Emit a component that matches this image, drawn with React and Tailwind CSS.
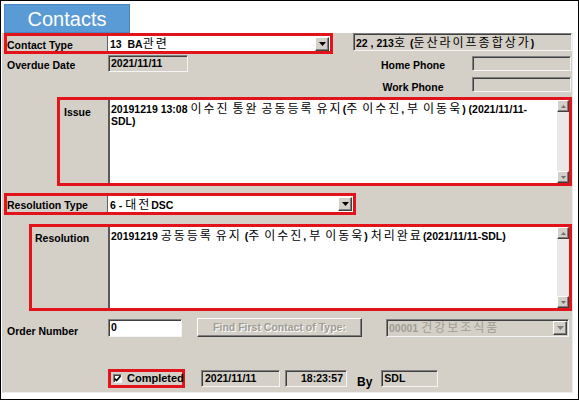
import React from "react";

const LAT = "font-['Liberation_Sans',Arial,'Noto_Sans_CJK_KR',sans-serif]";
const SUNKEN =
  "border border-t-[#808080] border-l-[#808080] border-b-[#f4f4f4] border-r-[#f4f4f4] shadow-[inset_1px_1px_0_#404040]";
const RAISED =
  "border border-t-white border-l-white border-b-[#404040] border-r-[#404040] shadow-[inset_-1px_-1px_0_#808080]";

function Txt({ s, kClass = "" }) {
  const parts = s.split(/([\uAC00-\uD7A3]+)/);
  return (
    <>
      {parts.map((p, i) =>
        /[\uAC00-\uD7A3]/.test(p) ? (
          <span
            key={i}
            className={
              "font-['Noto_Sans_CJK_KR',sans-serif] font-normal text-[12px] tracking-[2px] " + kClass
            }
          >
            {p}
          </span>
        ) : (
          <span key={i}>{p}</span>
        )
      )}
    </>
  );
}

function Arrow({ color = "#000" }) {
  return (
    <svg width="7" height="4" viewBox="0 0 7 4">
      <polygon points="0,0 7,0 3.5,4" fill={color} />
    </svg>
  );
}

function DropBtn({ color }) {
  return (
    <div className={"w-[14px] h-[14px] bg-[#d4d0c8] flex items-center justify-center shrink-0 " + RAISED}>
      <Arrow color={color} />
    </div>
  );
}

function Scrollbar() {
  return (
    <div className="w-[12px] h-full flex flex-col shrink-0">
      <div className={"h-[12px] bg-[#d4d0c8] flex items-center justify-center " + RAISED}>
        <svg width="5" height="3" viewBox="0 0 5 3">
          <polygon points="0,3 5,3 2.5,0" fill="#707070" />
        </svg>
      </div>
      <div className="flex-1 bg-[#ebe9e5]" />
      <div className={"h-[12px] bg-[#d4d0c8] flex items-center justify-center " + RAISED}>
        <svg width="5" height="3" viewBox="0 0 5 3">
          <polygon points="0,0 5,0 2.5,3" fill="#707070" />
        </svg>
      </div>
    </div>
  );
}

function Label({ children, className = "" }) {
  return (
    <span className={"text-[10.5px] font-bold text-black whitespace-nowrap leading-none " + className}>
      {children}
    </span>
  );
}

export default function App() {
  return (
    <div className={"w-[579px] h-[400px] bg-white border border-black flex flex-col overflow-hidden " + LAT}>
      <div className="mt-[3px] ml-[3px] w-[126px] h-[29px] bg-[#5b9bd5] border border-[#4a86c0] flex items-center justify-center">
        <span className="text-white text-[20px] leading-none">Contacts</span>
      </div>

      <div className="ml-[1px] w-[571px] h-[360px] bg-[#d4d0c8] border-r border-b border-[#ececec] flex flex-col">
        {/* Row 1 */}
        <div className="flex h-[21px]">
          <div className="ml-[2px] w-[329px] h-[21px] border-[3px] border-[#e3131b] flex items-center bg-[#d4d0c8]">
            <div className="w-[100px] leading-none">
              <Label>Contact Type</Label>
            </div>
            <div className="flex-1 h-full bg-white flex items-center pl-[2px] pr-[1px] border-l border-l-[#606060]">
              <span className="flex-1 text-[10.5px] font-bold whitespace-pre leading-none">
                <Txt s="13  BA관련" />
              </span>
              <DropBtn />
            </div>
          </div>
          <div className={"ml-[20px] w-[219px] h-[18px] bg-[#d4d0c8] flex items-center pl-[2px] " + SUNKEN}>
            <span className="text-[10.5px] font-bold whitespace-nowrap leading-none">
              <Txt s="22 , 213호 (둔산라이프종합상가)" />
            </span>
          </div>
        </div>

        {/* Row 2/3 */}
        <div className="flex mt-[1px]">
          <div className="flex items-center h-[17px]">
            <div className="w-[106px] pl-[5px] leading-none">
              <Label>Overdue Date</Label>
            </div>
            <div className={"w-[80px] h-[17px] bg-[#d4d0c8] flex items-center pl-[2px] " + SUNKEN}>
              <span className="text-[10.5px] font-bold leading-none">2021/11/11</span>
            </div>
          </div>
          <div className="ml-auto mr-[1px] flex flex-col gap-[6px] pt-[1px]">
            <div className="flex items-center h-[15px]">
              <div className="w-[90px] text-center pt-[1px] leading-none">
                <Label>Home Phone</Label>
              </div>
              <div className={"ml-[14px] w-[99px] h-[15px] bg-[#d4d0c8] " + SUNKEN} />
            </div>
            <div className="flex items-center h-[15px]">
              <div className="w-[90px] text-center pt-[2px] leading-none">
                <Label>Work Phone</Label>
              </div>
              <div className={"ml-[14px] w-[99px] h-[15px] bg-[#d4d0c8] " + SUNKEN} />
            </div>
          </div>
        </div>

        {/* Issue */}
        <div className="mt-[5px] ml-[55px] w-[515px] h-[89px] border-[3px] border-[#e3131b] flex">
          <div className="w-[48px] pl-[4px] pt-[3px] leading-none">
            <Label>Issue</Label>
          </div>
          <div className="flex-1 flex bg-white border-l-2 border-l-[#5a5a5a]">
            <div className="flex-1 pl-[1px] pt-[2px] text-[10.5px] font-bold leading-[12px] whitespace-nowrap overflow-hidden">
              <div>
                <Txt s="20191219 13:08 이수진 통완 공동등록 유지(주 이수진, 부 이동욱)  (2021/11/11-" />
              </div>
              <div>SDL)</div>
            </div>
            <Scrollbar />
          </div>
        </div>

        {/* Resolution Type */}
        <div className="mt-[7px] ml-[2px] w-[352px] h-[22px] border-[3px] border-[#e3131b] flex items-center">
          <div className="w-[100px] leading-none">
            <Label>Resolution Type</Label>
          </div>
          <div className="flex-1 h-full bg-white flex items-center pl-[2px] pr-[1px] border-l border-l-[#606060]">
            <span className="flex-1 text-[10.5px] font-bold whitespace-pre leading-none">
              <Txt s="6 - 대전DSC" />
            </span>
            <DropBtn />
          </div>
        </div>

        {/* Resolution */}
        <div className="mt-[9px] ml-[27px] w-[543px] h-[87px] border-[3px] border-[#e3131b] flex">
          <div className="w-[76px] pl-[3px] pt-[2px] leading-none">
            <Label>Resolution</Label>
          </div>
          <div className="flex-1 flex bg-white border-l-2 border-l-[#5a5a5a]">
            <div className="flex-1 pl-[1px] pt-[2px] text-[10.5px] font-bold leading-[12px] whitespace-nowrap overflow-hidden">
              <Txt s="20191219 공동등록 유지 (주 이수진, 부 이동욱) 처리완료(2021/11/11-SDL)" />
            </div>
            <Scrollbar />
          </div>
        </div>

        {/* Order Number row */}
        <div className="mt-[7px] flex items-center h-[19px]">
          <div className="w-[106px] pl-[5px] pt-[4px] leading-none">
            <Label>Order Number</Label>
          </div>
          <div className={"w-[74px] h-[18px] bg-white flex items-center pl-[2px] " + SUNKEN}>
            <span className="text-[10.5px] font-bold leading-none">0</span>
          </div>
          <div className={"ml-[15px] w-[165px] h-[19px] bg-[#d4d0c8] flex items-center justify-center " + RAISED}>
            <span className="text-[10.5px] font-bold text-[#a09c94] [text-shadow:1px_1px_0_#ffffff] leading-none whitespace-nowrap">
              Find First Contact of Type:
            </span>
          </div>
          <div className={"ml-[24px] w-[183px] h-[18px] bg-[#d4d0c8] flex items-center pl-[2px] pr-[1px] " + SUNKEN}>
            <span className="flex-1 text-[10.5px] font-bold text-[#a09c94] leading-none whitespace-nowrap">
              <Txt s="00001 건강보조식품" />
            </span>
            <DropBtn color="#808080" />
          </div>
        </div>

        {/* Completed row */}
        <div className="mt-[32px] flex items-center h-[19px]">
          <div className="ml-[106px] w-[77px] h-[19px] border-[3px] border-[#e3131b] flex items-center">
            <div className={"ml-[2px] w-[9px] h-[9px] bg-white flex items-center justify-center " + SUNKEN}>
              <svg width="7" height="7" viewBox="0 0 7 7">
                <polyline points="0.5,3.5 2.5,5.5 6.5,1" fill="none" stroke="#000" strokeWidth="1.6" />
              </svg>
            </div>
            <Label className="ml-[5px] text-[11px]">Completed</Label>
          </div>
          <div className={"ml-[16px] w-[79px] h-[17px] bg-[#d4d0c8] flex items-center pl-[3px] " + SUNKEN}>
            <span className="text-[10.5px] font-bold leading-none">2021/11/11</span>
          </div>
          <div className={"ml-[5px] w-[62px] h-[17px] bg-[#d4d0c8] flex items-center justify-end pr-[3px] " + SUNKEN}>
            <span className="text-[10.5px] font-bold leading-none">18:23:57</span>
          </div>
          <span className="ml-[10px] mt-[6px] text-[12px] font-bold leading-none">By</span>
          <div className={"ml-[9px] w-[57px] h-[17px] bg-[#d4d0c8] flex items-center pl-[2px] " + SUNKEN}>
            <span className="text-[10.5px] font-bold leading-none">SDL</span>
          </div>
        </div>
      </div>
    </div>
  );
}
